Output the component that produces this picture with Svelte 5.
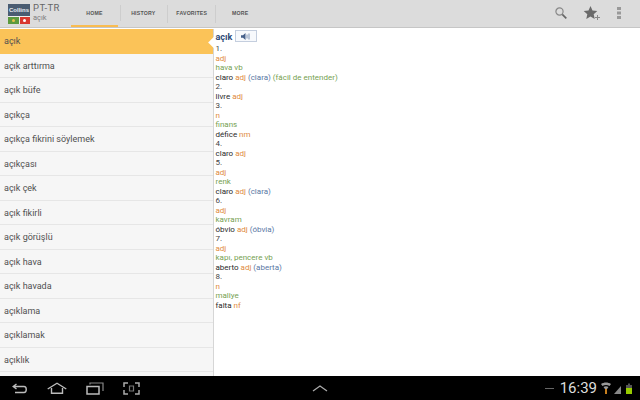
<script>
  const words = ['açık','açık arttırma','açık büfe','açıkça','açıkça fikrini söylemek','açıkçası','açık çek','açık fikirli','açık görüşlü','açık hava','açık havada','açıklama','açıklamak','açıklık'];
  const lines = [
    [['n','1.']],[['o','adj']],[['g','hava vb']],
    [['k','claro '],['o','adj'],['b',' (clara)'],['g',' (fácil de entender)']],
    [['n','2.']],[['k','livre '],['o','adj']],
    [['n','3.']],[['o','n']],[['g','finans']],[['k','défice '],['o','nm']],
    [['n','4.']],[['k','claro '],['o','adj']],
    [['n','5.']],[['o','adj']],[['g','renk']],[['k','claro '],['o','adj'],['b',' (clara)']],
    [['n','6.']],[['o','adj']],[['g','kavram']],[['k','óbvio '],['o','adj'],['b',' (óbvia)']],
    [['n','7.']],[['o','adj']],[['g','kapı, pencere vb']],[['k','aberto '],['o','adj'],['b',' (aberta)']],
    [['n','8.']],[['o','n']],[['g','maliye']],[['k','falta '],['o','nf']]
  ];
  const tabs = ['HOME','HISTORY','FAVORITES','MORE'];
</script>

<div class="screen">
  <header class="bar">
    <div class="logo">
      <div class="logo-top">Collins</div>
      <div class="logo-flags"><span class="pt"><i></i></span><span class="tr"><i></i></span></div>
    </div>
    <div class="title"><div class="t1">PT-TR</div><div class="t2">açık</div></div>
    <nav class="tabs">
      {#each tabs as t, i}
        <div class="tab" class:active={i === 0}>{t}</div>
      {/each}
    </nav>
    <div class="actions">
      <svg width="14" height="14" viewBox="0 0 14 14"><circle cx="5.5" cy="5.5" r="3.6" fill="none" stroke="#888" stroke-width="1.2"/><path d="M8.300 8.300l4 4" stroke="#666" stroke-width="1.700"/></svg>
      <svg width="18" height="16" viewBox="0 0 18 16"><path d="M7.500 1l2 4.500 4.800.5-3.600 3.200 1 4.800-4.200-2.500-4.200 2.500 1-4.800L.7 6l4.800-.5z" fill="#6a6a6a"/><path d="M14.500 10v5M12 12.500h5" stroke="#888" stroke-width="1"/></svg>
      <svg width="6" height="14" viewBox="0 0 6 14"><g fill="#999"><rect x="1" y="1" width="4" height="3"/><rect x="1" y="5.500" width="4" height="3"/><rect x="1" y="10" width="4" height="3"/></g></svg>
    </div>
  </header>

  <main class="main">
    <ul class="list">
      {#each words as w, i}
        <li class="row" class:sel={i === 0}>{w}</li>
      {/each}
    </ul>
    <section class="entry">
      <span class="notch"></span>
      <div class="head"><b>açık</b><span class="sound">
        <svg width="10" height="7" viewBox="0 0 10 7"><path d="M0 2.200h2L4.500 0v7L2 4.800H0z" fill="#46608a"/><path d="M6 1.500v4M8 .5v6" stroke="#7d92b3" stroke-width="1"/></svg>
      </span></div>
      {#each lines as l}
        <div class="line">{#each l as [c, s]}<span class={c}>{s}</span>{/each}</div>
      {/each}
    </section>
  </main>

  <footer class="sys">
    <div class="nav">
      <svg width="16" height="11" viewBox="0 0 16 11"><path d="M4.500 1L1.200 3.500 4.500 6M2 3.500h10c3 0 3 6 0 6H3" fill="none" stroke="#bbb" stroke-width="1.400"/></svg>
      <svg width="20" height="12" viewBox="0 0 20 12"><path d="M.7 7L10 1.200 19.300 7M4.500 6v5.300h11V6" fill="none" stroke="#bbb" stroke-width="1.400"/></svg>
      <svg width="18" height="13" viewBox="0 0 18 13"><path d="M1 4.500h12V12H1z" fill="none" stroke="#bbb" stroke-width="1.500"/><path d="M4 2.500V1h13v8" fill="none" stroke="#888" stroke-width="1.200"/></svg>
      <svg width="17" height="13" viewBox="0 0 17 13"><path d="M5 1H1v4M12 1h4v4M5 12H1V8M12 12h4V8" fill="none" stroke="#aaa" stroke-width="1.500"/><path d="M6.500 4h4v5h-4z" fill="none" stroke="#777" stroke-width="1.200"/></svg>
    </div>
    <svg class="up" width="16" height="7" viewBox="0 0 16 7"><path d="M1 6l7-5 7 5" fill="none" stroke="#aaa" stroke-width="1.300"/></svg>
    <div class="status">
      <span class="dash"></span>
      <span class="clock">16:39</span>
      <svg width="34" height="14" viewBox="0 0 34 14"><path d="M1 3c3-2 7-2 10 0l-1.500 2c-2-1.500-5-1.500-7 0zM3.500 6c1.500-1 3.500-1 5 0L6 9.500z" fill="#999"/><path d="M5 8h2v5H5z" fill="#c77f1e"/><path d="M14 13L21 5v8z" fill="#888"/><path d="M26 4h6v9h-6z" fill="#98cc00"/><path d="M28 2.500h2V4h-2zM26 4h6v3h-6z" fill="#555"/></svg>
    </div>
  </footer>
</div>

<style>
  :global(body) { margin: 0; }
  .screen { width: 640px; height: 400px; display: flex; flex-direction: column; overflow: hidden; background: #fff; font-family: Roboto, "Liberation Sans", sans-serif; }
  .bar { height: 27px; flex: none; display: flex; align-items: stretch; background: #dcdcdc; border-bottom: 1px solid #c6c6c6; }
  .logo { width: 22px; height: 20px; margin: 4px 0 0 8px; display: flex; flex-direction: column; }
  .logo-top { height: 12px; background: #4a5c72; color: #e8eef5; font: bold 6px/12px "Liberation Sans", sans-serif; text-align: center; overflow: hidden; }
  .logo-flags { flex: 1; display: flex; gap: 1px; background: #eee; padding-top: 1px; }
  .pt { flex: 1; background: #5c9a3e; display: flex; align-items: center; justify-content: center; }
  .pt i { width: 3px; height: 3px; border-radius: 50%; background: #e8c04a; }
  .tr { flex: 1; background: #d9382f; display: flex; align-items: center; justify-content: center; }
  .tr i { width: 3px; height: 3px; border-radius: 50%; background: #fff; }
  .title { width: 38px; margin: 3px 0 0 3px; }
  .t1 { font-size: 9.500px; line-height: 10px; letter-spacing: .4px; color: #666; }
  .t2 { font-size: 7.500px; line-height: 10px; color: #808080; }
  .tabs { display: flex; }
  .tab { position: relative; height: 27px; width: 48.500px; display: flex; align-items: center; justify-content: center; font: bold 5.200px "Liberation Sans", sans-serif; color: #555; letter-spacing: .2px; box-sizing: border-box; padding-bottom: 1px; }
  .tab::after { content: ""; position: absolute; right: 0; top: 5px; bottom: 4px; width: 1px; background: #cdcdcd; }
  .tab:last-child::after { display: none; }
  .tab.active { width: 47px; border-bottom: 2px solid #f9bc51; padding-bottom: 0; margin-right: 1px; }
  .tab.active::after { right: -3px; }
  .actions { margin-left: auto; display: flex; align-items: center; gap: 15px; padding: 0 18px 0 0; margin-bottom: 2px; }
  .main { flex: 1; display: flex; min-height: 0; position: relative; padding-top: 1px; }
  .list { width: 213px; flex: none; margin: 0; padding: 0; list-style: none; background: #f6f6f6; border-right: 1px solid #d6d6d6; overflow: hidden; }
  .row { height: 24.500px; box-sizing: border-box; line-height: 24px; padding-left: 4px; font-size: 9px; color: #505050; border-bottom: 1px solid #e6e6e6; }
  .row.sel { background: #fbc358; border-bottom: 0; }
  .entry { flex: 1; padding: 2px 0 0 1.500px; font-size: 8px; line-height: 9.500px; position: relative; }
  .notch { position: absolute; left: -7px; top: 6px; width: 7px; height: 14px; overflow: hidden; }
  .notch::before { content: ""; position: absolute; left: 3px; top: 2.500px; width: 9px; height: 9px; background: #fff; transform: rotate(45deg); }
  .head { display: flex; align-items: center; height: 13px; }
  .head b { font-size: 9px; color: #2d4a78; font-weight: bold; }
  .sound { width: 20px; height: 10px; margin: -3px 0 0 3px; border: 1px solid #c4cede; background: #f7f9fc; display: flex; align-items: center; justify-content: center; }
  .k { color: #2a2a2a; }
  .n { color: #444; }
  .o { color: #e08a3c; }
  .g { color: #769f52; }
  .b { color: #5a78a5; }
  .sys { height: 24px; flex: none; background: #000; display: flex; align-items: center; position: relative; }
  .nav { display: flex; align-items: center; gap: 19px; padding-left: 12px; }
  .up { position: absolute; left: 312px; top: 9px; }
  .status { margin-left: auto; display: flex; align-items: center; padding-right: 6px; }
  .dash { width: 9px; height: 1px; background: #666; margin-right: 6px; }
  .clock { color: #ddd; font-size: 15px; margin-right: 3px; }
</style>
